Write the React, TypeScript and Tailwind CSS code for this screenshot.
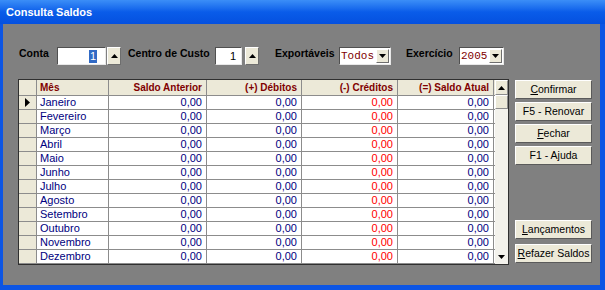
import React from 'react'

const months = [
  'Janeiro', 'Fevereiro', 'Março', 'Abril', 'Maio', 'Junho',
  'Julho', 'Agosto', 'Setembro', 'Outubro', 'Novembro', 'Dezembro',
]

const font = { fontFamily: '"Liberation Sans", Arial, sans-serif' }

const UpArrow = () => (
  <svg width="7" height="4" viewBox="0 0 7 4"><polygon points="0,4 7,4 3.5,0" fill="#000" /></svg>
)

const DownArrow = () => (
  <svg width="7" height="4" viewBox="0 0 7 4"><polygon points="0,0 7,0 3.5,4" fill="#000" /></svg>
)

const Spin = ({ ml }: { ml: string }) => (
  <div className={`${ml} w-[14px] h-[18px] bg-[#ece9d8] border border-t-white border-l-white border-b-[#6e6e6e] border-r-[#6e6e6e] flex items-center justify-center`}>
    <UpArrow />
  </div>
)

const Combo = ({ value, width }: { value: string; width: string }) => (
  <div className={`${width} h-[18px] bg-white border border-t-[#505050] border-l-[#505050] border-b-[#e8e8e8] border-r-[#e8e8e8] flex items-center`}>
    <span className="flex-1 pl-[1px] text-[11px] text-[#800000]" style={{ fontFamily: '"Liberation Mono", monospace' }}>{value}</span>
    <div className="w-[13px] h-[14px] mr-[1px] bg-[#ece9d8] border border-t-white border-l-white border-b-[#6e6e6e] border-r-[#6e6e6e] flex items-center justify-center">
      <DownArrow />
    </div>
  </div>
)

const Btn = ({ children }: { children: React.ReactNode }) => (
  <div className="w-[77px] h-[19px] bg-[#ece9d8] border border-t-white border-l-white border-b-[#5a5a5a] border-r-[#5a5a5a] flex items-center justify-center text-[10.5px] whitespace-nowrap text-black">
    {children}
  </div>
)

const cols = [
  { key: 'mes', label: 'Mês', w: 'w-[72px]', align: 'text-left pl-[3px]', color: 'text-[#000080]' },
  { key: 'ant', label: 'Saldo Anterior', w: 'w-[98px]', align: 'text-right pr-[4px]', color: 'text-[#000080]' },
  { key: 'deb', label: '(+) Débitos', w: 'w-[95px]', align: 'text-right pr-[4px]', color: 'text-[#000080]' },
  { key: 'cred', label: '(-) Créditos', w: 'w-[96px]', align: 'text-right pr-[4px]', color: 'text-[#ff0000]' },
  { key: 'atual', label: '(=) Saldo Atual', w: 'w-[96px]', align: 'text-right pr-[4px]', color: 'text-[#000080]' },
]

export default function App() {
  return (
    <div className="w-[605px] h-[290px] flex flex-col bg-[#0c55e4]" style={font}>
      <div className="h-[24px] shrink-0 flex items-center pl-[6px] bg-linear-to-b from-[#3b8ef7] via-[#0a5ce9] to-[#0550df]">
        <span className="text-white font-bold text-[11px]">Consulta Saldos</span>
      </div>

      <div className="flex-1 ml-[3px] mr-[5px] mb-[5px] bg-[#808080] pl-[15px] pt-[23px] flex flex-col">
        <div className="flex items-center h-[18px] ml-[1px]">
          <span className="w-[38px] mb-[4px] text-[10.5px] font-bold text-black">Conta</span>
          <div className="w-[49px] h-[18px] bg-white border border-t-[#505050] border-l-[#505050] border-b-[#e8e8e8] border-r-[#e8e8e8] flex items-center justify-end pr-[8px]">
            <span className="bg-[#316ac5] text-white text-[11px] leading-[13px] px-[1px]">1</span>
          </div>
          <Spin ml="ml-[1px]" />
          <span className="ml-[7px] w-[87px] mb-[4px] text-[10.5px] font-bold text-black">Centro de Custo</span>
          <div className="w-[27px] h-[18px] bg-white border border-t-[#505050] border-l-[#505050] border-b-[#e8e8e8] border-r-[#e8e8e8] flex items-center justify-end pr-[5px]">
            <span className="text-black text-[11px]">1</span>
          </div>
          <Spin ml="ml-[3px]" />
          <span className="ml-[16px] w-[64px] mb-[4px] text-[10.5px] font-bold text-black">Exportáveis</span>
          <Combo value="Todos" width="w-[52px]" />
          <span className="ml-[15px] w-[53px] mb-[4px] text-[10.5px] font-bold text-black">Exercício</span>
          <Combo value="2005" width="w-[45px]" />
        </div>

        <div className="flex mt-[14px]">
          <div className="w-[491px] h-[186px] border border-[#303030] flex bg-white">
            <div className="flex flex-col w-[476px]">
              <div className="flex h-[16px] bg-[#ece9d8] border-b border-[#8c8c8c]">
                <div className="w-[18px] border-r border-[#8c8c8c]" />
                {cols.map((c) => (
                  <div key={c.key} className={`${c.w} ${c.align} border-r border-[#8c8c8c] text-[10px] font-bold text-[#800000] leading-[15px] whitespace-nowrap`}>
                    {c.label}
                  </div>
                ))}
              </div>
              {months.map((m, i) => (
                <div key={m} className="flex h-[14px] border-b border-[#8c8c8c]">
                  <div className="w-[18px] bg-[#ece9d8] border-r border-[#8c8c8c] flex items-center justify-center">
                    {i === 0 && (
                      <svg width="5" height="9" viewBox="0 0 5 9"><polygon points="0,0 5,4.5 0,9" fill="#000" /></svg>
                    )}
                  </div>
                  {cols.map((c) => (
                    <div key={c.key} className={`${c.w} ${c.align} ${c.color} border-r border-[#8c8c8c] text-[11px] leading-[13px]`}>
                      {c.key === 'mes' ? m : '0,00'}
                    </div>
                  ))}
                </div>
              ))}
            </div>
            <div className="w-[13px] flex flex-col bg-[#f3f2ec]">
              <div className="h-[15px] bg-[#ece9d8] border border-t-white border-l-white border-b-[#8c8c8c] border-r-[#8c8c8c] flex items-center justify-center">
                <UpArrow />
              </div>
              <div className="h-[14px] bg-[#ece9d8] border border-t-white border-l-white border-b-[#8c8c8c] border-r-[#8c8c8c]" />
              <div className="flex-1" />
              <div className="h-[14px] flex items-center justify-center">
                <DownArrow />
              </div>
            </div>
          </div>

          <div className="ml-[6px] pt-[1px] pb-[2px] flex flex-col justify-between">
            <div className="flex flex-col gap-[3px]">
              <Btn><span className="underline">C</span>onfirmar</Btn>
              <Btn>F5 - Renovar</Btn>
              <Btn><span className="underline">F</span>echar</Btn>
              <Btn>F1 - Ajuda</Btn>
            </div>
            <div className="flex flex-col gap-[5px]">
              <Btn><span className="underline">L</span>ançamentos</Btn>
              <Btn><span className="underline">R</span>efazer Saldos</Btn>
            </div>
          </div>
        </div>
      </div>
    </div>
  )
}
